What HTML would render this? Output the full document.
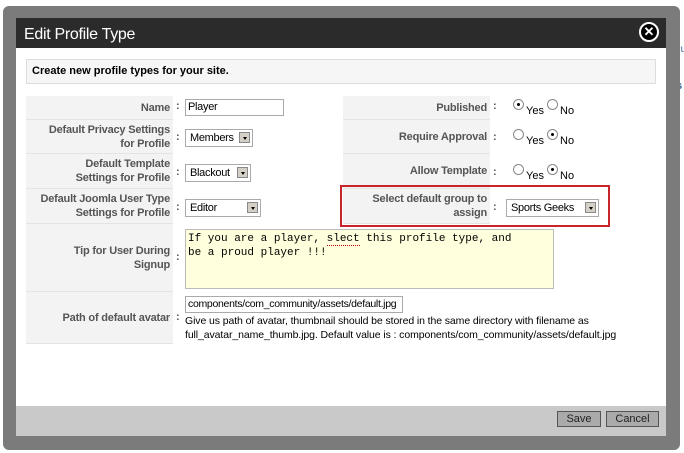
<!DOCTYPE html>
<html><head><style>
body{margin:0;width:684px;height:453px;background:#fff;position:relative;overflow:hidden;font-family:"Liberation Sans",Arial,sans-serif;font-size:11px;color:#000}
.a{position:absolute}
.lab{position:absolute;background:#f3f3f3;color:#555;font-weight:bold;text-align:right;font-size:11px;letter-spacing:-0.2px;line-height:14px;display:flex;align-items:center;justify-content:flex-end;padding-right:3px;box-sizing:border-box;border-bottom:1px solid #e4e4e4}
.col{position:absolute;font-weight:bold;color:#555}
.inp{position:absolute;border:1px solid #aaa;background:#fff;font-size:11px;line-height:15px;padding-left:2px;box-sizing:border-box;letter-spacing:-0.3px}
.sel{position:absolute;border:1px solid #aaa;background:#fff;font-size:11px;line-height:16px;padding-left:4px;box-sizing:border-box;letter-spacing:-0.3px}
.sel i{position:absolute;right:2px;top:2px;width:11px;height:11px;background:#d4d0c8;border:1px solid #888;box-sizing:border-box}
.sel i:after{content:"";position:absolute;left:3px;top:4px;border:2px solid transparent;border-top:3px solid #000}
.rad{position:absolute;font-size:11px}
.r{display:inline-block;width:9px;height:9px;border:1px solid #888;border-radius:50%;background:#fff;position:relative;top:-4px;margin-right:2px}
.r.on:after{content:"";position:absolute;left:3px;top:3px;width:3px;height:3px;background:#000;border-radius:50%}
</style></head><body>
<div class="a" style="left:666px;top:0;width:18px;height:453px;background:#fff"></div>
<div class="a" style="left:674px;top:44px;font-size:10px;color:#369">Pu</div>
<div class="a" style="left:670px;top:80px;font-size:11px;color:#369;font-weight:bold">es</div>
<div class="a" style="left:3px;top:6px;width:677px;height:444px;background:#7b7b7b;border-radius:6px"></div>
<div class="a" style="left:16px;top:18px;width:650px;height:44px;background:#2b2b2b"></div>
<div class="a" style="left:24px;top:25px;color:#fff;font-size:16px;line-height:20px;letter-spacing:-0.3px">Edit Profile Type</div>
<div class="a" style="left:639px;top:22px;width:20px;height:20px;border:2px solid #fff;border-radius:50%;background:#000;color:#fff;font-weight:bold;font-size:13px;line-height:16px;text-align:center;box-sizing:border-box">✕</div>
<div class="a" style="left:16px;top:48px;width:650px;height:358px;background:#fff"></div>
<div class="a" style="left:16px;top:406px;width:650px;height:30px;background:#c9c9c9"></div>
<div class="a" style="left:26px;top:59px;width:630px;height:25px;background:#f6f6f6;border:1px solid #ddd;box-sizing:border-box;font-weight:bold;font-size:11px;line-height:23px;padding-left:5px">Create new profile types for your site.</div>

<div class="lab" style="left:26px;top:96px;width:147px;height:24px">Name</div>
<div class="lab" style="left:26px;top:120px;width:147px;height:34px">Default Privacy Settings<br>for Profile</div>
<div class="lab" style="left:26px;top:154px;width:147px;height:35px">Default Template<br>Settings for Profile</div>
<div class="lab" style="left:26px;top:189px;width:147px;height:35px">Default Joomla User Type<br>Settings for Profile</div>
<div class="lab" style="left:26px;top:224px;width:147px;height:68px">Tip for User During<br>Signup</div>
<div class="lab" style="left:26px;top:292px;width:147px;height:52px">Path of default avatar</div>
<div class="col" style="left:176px;top:100px">:</div>
<div class="col" style="left:176px;top:131px">:</div>
<div class="col" style="left:176px;top:166px">:</div>
<div class="col" style="left:176px;top:201px">:</div>
<div class="col" style="left:176px;top:251px">:</div>
<div class="col" style="left:176px;top:311px">:</div>
<div class="inp" style="left:185px;top:99px;width:99px;height:17px">Player</div>
<div class="sel" style="left:185px;top:129px;width:68px;height:18px">Members<i></i></div>
<div class="sel" style="left:185px;top:164px;width:66px;height:18px">Blackout<i></i></div>
<div class="sel" style="left:185px;top:199px;width:76px;height:18px">Editor<i></i></div>
<div class="a" style="left:185px;top:229px;width:369px;height:60px;background:#ffffdd;border:1px solid #bbb;box-sizing:border-box;font-family:'Liberation Mono',monospace;font-size:11px;line-height:14px;padding:2px">If you are a player, <span style="border-bottom:1px dotted #c00">slect</span> this profile type, and<br>be a proud player !!!</div>
<div class="inp" style="left:185px;top:296px;width:218px;height:17px;font-size:10.5px;overflow:hidden;white-space:nowrap">components/com_community/assets/default.jpg</div>
<div class="a" style="left:185px;top:314px;font-size:10.5px;line-height:14px;width:470px;letter-spacing:-0.1px;white-space:nowrap">Give us path of avatar, thumbnail should be stored in the same directory with filename as<br>full_avatar_name_thumb.jpg. Default value is : components/com_community/assets/default.jpg</div>

<div class="lab" style="left:343px;top:96px;width:147px;height:24px">Published</div>
<div class="lab" style="left:343px;top:120px;width:147px;height:34px">Require Approval</div>
<div class="lab" style="left:343px;top:154px;width:147px;height:35px">Allow Template</div>
<div class="lab" style="left:343px;top:189px;width:147px;height:35px">Select default group to<br>assign</div>
<div class="col" style="left:493px;top:100px">:</div>
<div class="col" style="left:493px;top:131px">:</div>
<div class="col" style="left:493px;top:166px">:</div>
<div class="col" style="left:493px;top:201px">:</div>
<div class="rad" style="left:513px;top:103px"><span class="r on"></span>Yes <span class="r"></span>No</div>
<div class="rad" style="left:513px;top:133px"><span class="r"></span>Yes <span class="r on"></span>No</div>
<div class="rad" style="left:513px;top:168px"><span class="r"></span>Yes <span class="r on"></span>No</div>
<div class="sel" style="left:506px;top:199px;width:93px;height:18px">Sports Geeks<i></i></div>
<div class="a" style="left:340px;top:185px;width:270px;height:42px;border:2px solid #c8252a;box-sizing:border-box"></div>

<div class="a" style="left:557px;top:411px;width:44px;height:16px;background:#aaa;border:1px solid #555;box-sizing:border-box;text-align:center;line-height:14px;font-size:11px;color:#222">Save</div>
<div class="a" style="left:606px;top:411px;width:53px;height:16px;background:#aaa;border:1px solid #555;box-sizing:border-box;text-align:center;line-height:14px;font-size:11px;color:#222">Cancel</div>
</body></html>
